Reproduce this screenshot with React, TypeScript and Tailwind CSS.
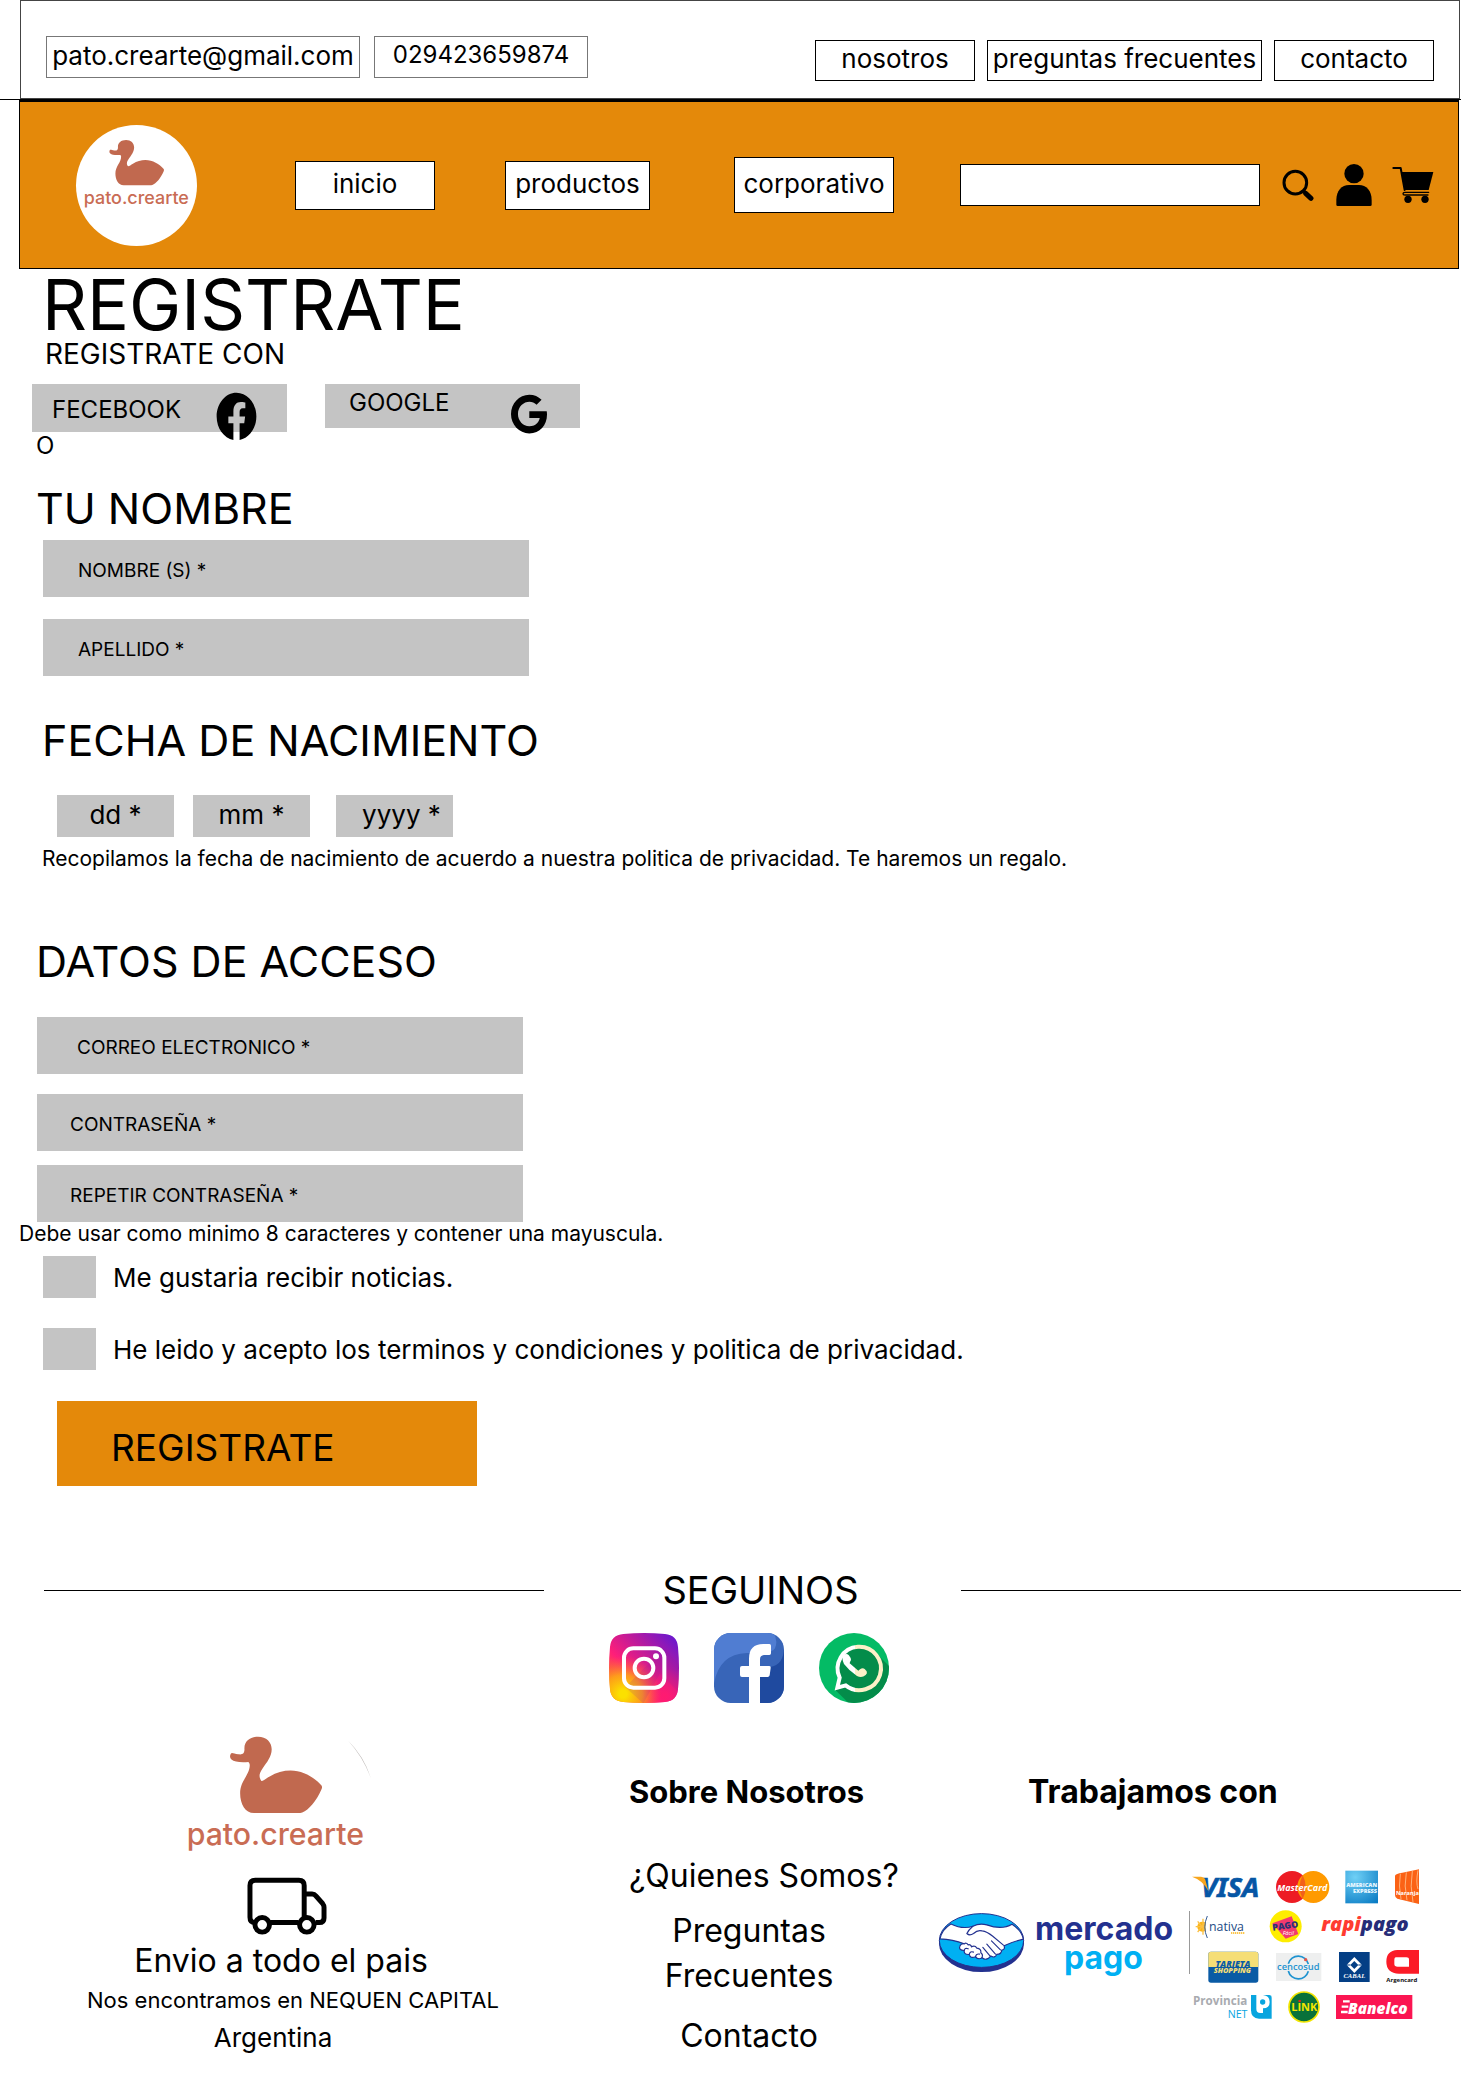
import type { ReactNode } from "react";
import { FaFacebook, FaGoogle } from "react-icons/fa";

const navBox =
  "flex items-center justify-center border border-black bg-white pb-1 text-[26px] whitespace-nowrap";
const heading = "text-[43px] leading-[48px] whitespace-nowrap";
const field =
  "block h-[57px] w-full max-w-[486px] bg-[#c4c4c4] pt-1 text-[19px] text-black placeholder:text-black placeholder:opacity-100";
const dateField =
  "h-[42px] w-[117px] bg-[#c4c4c4] pb-1 text-center text-[26px] text-black placeholder:text-black placeholder:opacity-100";

function DuckLogo({ arc = false, className }: { arc?: boolean; className: string }) {
  return (
    <svg
      viewBox={arc ? "375 105 560 355" : "375 105 540 355"}
      className={className}
      role="img"
      aria-label="pato.crearte"
    >
      <path
        fill="#c1694f"
        d="M510 161C513 156 520 162 532 163C545 165 551 161 551 148C549 124 568 110 592 110C617 110 633 126 633 148C633 170 618 188 606 205C594 222 594 232 602 243C609 243 617 235 627 230C647 218 668 212 690 212C727 212 762 233 783 257Q786 262 783 268C768 303 745 330 725 338Q720 340 712 340L580 340C553 340 538 312 538 280C538 243 567 225 567 195Q567 190 563 186C540 188 520 186 512 179C506 173 507 166 510 161Z"
      />
      {arc && <path d="M862 121Q910 168 932 235Q906 168 862 121Z" fill="#b9b4b2" />}
      <text
        x="644"
        y="436"
        textAnchor="middle"
        fontFamily="Inter, sans-serif"
        fontWeight="500"
        fontSize="91"
        fill="#c96c54"
      >
        pato.crearte
      </text>
    </svg>
  );
}

function SearchIcon() {
  return (
    <svg viewBox="39 56 96 96" className="size-8" fill="none" stroke="#000" aria-hidden="true">
      <circle cx="79" cy="97" r="34" strokeWidth="9" />
      <path d="M104 122L110 127" strokeWidth="9" />
      <path d="M110 129L126 144" strokeWidth="15" strokeLinecap="round" />
    </svg>
  );
}

function UserIcon() {
  return (
    <svg viewBox="201 42 108 126" className="h-[42px] w-9" aria-hidden="true">
      <circle cx="255" cy="71" r="29" />
      <path d="M202 164V150C202 122 218 105 240 105H270C292 105 308 122 308 150V164Q308 168 304 168H206Q202 168 202 164Z" />
    </svg>
  );
}

function CartIcon() {
  return (
    <svg viewBox="368 48 126 114" className="h-[38px] w-[42px]" aria-hidden="true">
      <path d="M372 54H394L406 120" fill="none" stroke="#000" strokeWidth="6" strokeLinecap="round" strokeLinejoin="round" />
      <path d="M397 66H492L478 120H407Z" />
      <path d="M478 127H407Q401 127 401 131Q401 135 407 135H476" fill="none" stroke="#000" strokeWidth="4" strokeLinecap="round" />
      <circle cx="416" cy="148" r="11" />
      <circle cx="467" cy="148" r="11" />
    </svg>
  );
}

function InstagramIcon() {
  return (
    <svg viewBox="147 249 210 210" className="size-[70px]" aria-hidden="true">
      <defs>
        <linearGradient id="igBase" x1="0" y1="1" x2="1" y2="0">
          <stop offset="0.1" stopColor="#ff7a1a" />
          <stop offset="0.38" stopColor="#ff1f78" />
          <stop offset="0.65" stopColor="#b91a9d" />
          <stop offset="1" stopColor="#5a18d8" />
        </linearGradient>
        <radialGradient id="igSun" cx="0.2" cy="0.87" r="0.55">
          <stop offset="0.1" stopColor="#fbe000" />
          <stop offset="0.5" stopColor="#fdb010" stopOpacity="0.8" />
          <stop offset="1" stopColor="#ff5a40" stopOpacity="0" />
        </radialGradient>
        <radialGradient id="igPink" cx="0.8" cy="0.9" r="0.4">
          <stop offset="0" stopColor="#ff1a70" />
          <stop offset="1" stopColor="#ff1a70" stopOpacity="0" />
        </radialGradient>
        <clipPath id="igClip">
          <path d="M190 252Q252 246 315 252Q351 255 354 291Q360 354 354 417Q351 453 315 456Q252 462 190 456Q153 453 150 417Q144 354 150 291Q153 255 190 252Z" />
        </clipPath>
      </defs>
      <g clipPath="url(#igClip)">
        <rect x="147" y="249" width="210" height="210" fill="url(#igBase)" />
        <rect x="147" y="249" width="210" height="210" fill="url(#igPink)" />
        <rect x="147" y="249" width="210" height="210" fill="url(#igSun)" />
        <path d="M309 296L360 345V430L300 370L250 460L196 412Z" fill="#8a1a9c" opacity="0.15" />
      </g>
      <rect x="192" y="295" width="121" height="118" rx="28" fill="none" stroke="#fff" strokeWidth="12" />
      <circle cx="252" cy="354" r="28" fill="none" stroke="#fff" strokeWidth="12" />
      <circle cx="288" cy="319" r="9" fill="#fff" />
    </svg>
  );
}

function FacebookColorIcon() {
  return (
    <svg viewBox="462 249 210 210" className="size-[70px]" aria-hidden="true">
      <defs>
        <clipPath id="fbClip">
          <rect x="462" y="249" width="210" height="210" rx="50" />
        </clipPath>
      </defs>
      <g clipPath="url(#fbClip)">
        <rect x="462" y="249" width="210" height="210" fill="#3865b8" />
        <path d="M462 249H640Q655 270 645 295Q636 310 600 309H560Q478 312 462 400Z" fill="#507dd2" />
        <path d="M672 290Q672 345 630 351L600 380V459H672Z" fill="#1f4a9f" />
      </g>
      <path
        fill="#fff"
        d="M567 459V381H546Q540 381 540 375V354Q540 348 546 348H567V326Q567 282 610 282H628Q633 282 633 287V310Q633 315 628 315H612Q600 316 600 328V348H627Q633 348 632 354L629 376Q628 381 623 381H600V459Z"
      />
    </svg>
  );
}

function WhatsappIcon() {
  return (
    <svg viewBox="780 249 210 210" className="size-[70px]" aria-hidden="true">
      <defs>
        <clipPath id="waClip">
          <circle cx="885" cy="354" r="105" />
        </clipPath>
        <linearGradient id="waTone" gradientUnits="userSpaceOnUse" x1="780" y1="0" x2="990" y2="0">
          <stop offset="0.51" stopColor="#fff" />
          <stop offset="0.51" stopColor="#fdf0c8" />
        </linearGradient>
      </defs>
      <g clipPath="url(#waClip)">
        <rect x="780" y="249" width="210" height="210" fill="#04bb65" />
        <path d="M938 296L1000 358V470H880L829 420Z" fill="#048c4a" />
      </g>
      <path
        d="M835 413L842 383A65 65 0 1 1 860 406Z"
        fill="#048c4a"
        stroke="url(#waTone)"
        strokeWidth="12"
      />
      <path
        fill="url(#waTone)"
        d="M853 316Q862 308 869 315L875 324Q878 330 873 336L872 340L898 362L903 358Q911 352 917 357L923 364Q926 370 920 375Q908 386 894 378Q870 362 855 342Q847 326 853 316Z"
      />
    </svg>
  );
}

function TruckIcon() {
  return (
    <svg viewBox="560 537 242 174" className="h-[58px] w-20" fill="none" stroke="#000" strokeWidth="15" aria-hidden="true">
      <path d="M584 674Q569 674 569 658V562Q569 546 585 546H717Q733 546 733 562V660M630 674H716" />
      <path d="M738 588H757Q764 588 769 594L789 617Q793 622 793 628V660Q793 674 779 674H768" />
      <circle cx="606" cy="681" r="22" />
      <circle cx="741" cy="681" r="22" />
    </svg>
  );
}

function HandshakeLogo() {
  return (
    <svg viewBox="25 36 262 182" className="h-[61px] w-[87px] shrink-0" role="img" aria-label="Mercado Pago">
      <ellipse cx="156" cy="130" rx="128" ry="86" fill="#23318f" />
      <ellipse cx="156" cy="121" rx="127" ry="81" fill="#00b0f3" stroke="#23318f" strokeWidth="3" />
      <path
        d="M64 71C90 84 112 84 130 78Q150 68 172 74C200 84 228 84 248 72Q278 92 282 117Q250 124 224 137Q228 148 217 150Q216 163 202 163Q196 175 184 168Q170 184 158 173Q146 180 138 170Q122 176 119 163Q102 164 104 151Q86 150 91 138Q94 130 104 131Q70 118 31 116Q36 88 64 71Z"
        fill="#fff"
        stroke="#23318f"
        strokeWidth="3.5"
      />
      <path
        d="M130 78Q116 90 112 100Q120 108 132 100Q144 88 158 92Q172 94 190 108L222 135M186 122L213 149M172 132L198 162M160 142L182 168M104 131Q110 126 116 134Q124 132 126 140Q136 134 142 144Q156 146 154 158Q162 164 157 173M104 151Q106 142 116 146M119 163Q122 152 132 156M138 170Q140 160 150 162"
        fill="none"
        stroke="#23318f"
        strokeWidth="3.5"
        strokeLinecap="round"
      />
    </svg>
  );
}

function Mark({ box, size, label, children }: { box: string; size: string; label: string; children: ReactNode }) {
  return (
    <svg viewBox={box} className={`${size} shrink-0`} role="img" aria-label={label} fontFamily="'Open Sans', sans-serif">
      {children}
    </svg>
  );
}

function PaymentMarks() {
  return (
    <div className="flex w-[229px] shrink-0 flex-col gap-[5px] overflow-hidden pt-0.5">
      <div className="flex gap-[15px] pl-px">
        <Mark box="36 30 207 105" size="h-[35px] w-[69px]" label="Visa">
          <text x="66" y="115" fontSize="82" fontWeight="700" fontStyle="italic" fontFamily="'Noto Sans', sans-serif" fill="#0656a5" stroke="#0656a5" strokeWidth="2">VISA</text>
          <path d="M39 53H66Q78 54 80 66L88 96Q72 64 39 53Z" fill="#f7a51d" />
        </Mark>
        <Mark box="291 30 165 105" size="h-[35px] w-[55px]" label="MasterCard">
          <circle cx="342" cy="84" r="48" fill="#ed1c24" />
          <circle cx="406" cy="84" r="48" fill="#ff9a00" />
          <path d="M374 48Q356 84 374 120Q392 84 374 48Z" fill="#f2601a" />
          <text x="373" y="95" fontSize="27" fontWeight="700" fontStyle="italic" textAnchor="middle" fill="#fff">MasterCard</text>
        </Mark>
        <Mark box="498 30 102 105" size="h-[35px] w-[34px]" label="American Express">
          <defs>
            <radialGradient id="amex" cx="0.3" cy="0.2" r="1">
              <stop offset="0" stopColor="#6fd0f6" />
              <stop offset="1" stopColor="#0a7cc4" />
            </radialGradient>
          </defs>
          <rect x="499" y="35" width="98" height="98" fill="url(#amex)" />
          <text x="548" y="83" fontSize="17" fontWeight="800" textAnchor="middle" fill="#e8f7ff">AMERICAN</text>
          <text x="558" y="102" fontSize="17" fontWeight="800" textAnchor="middle" fill="#e8f7ff">EXPRESS</text>
        </Mark>
        <Mark box="645 30 75 105" size="h-[35px] w-[25px]" label="Naranja">
          <path d="M648 50Q650 44 670 41L720 31V135L655 119Q648 117 648 108Z" fill="#fb6215" />
          <path d="M664 44Q658 80 666 120M682 40Q674 80 684 124M700 36Q692 80 702 130M717 34Q710 70 717 90" fill="none" stroke="#ffb27a" strokeWidth="3" />
          <text x="651" y="108" fontSize="17" fontWeight="700" fill="#fff">Naranja</text>
        </Mark>
      </div>
      <div className="flex pl-[5px]">
        <Mark box="48 147 153 105" size="h-[35px] w-[51px]" label="Nativa">
          <circle cx="70" cy="200" r="15" fill="#fbb415" />
          <path d="M72 176V224M50 200H90M56 184L82 216M56 216L82 184" stroke="#fbc045" strokeWidth="4" />
          <path d="M86 168Q72 202 86 234L100 234V168Z" fill="#fff" />
          <path d="M85 168Q70 202 85 234" fill="none" stroke="#345c96" strokeWidth="3" />
          <text x="90" y="214" fontSize="37" fill="#234b85">nativa</text>
          <path d="M156 219H196" stroke="#fbb415" strokeWidth="5" strokeDasharray="4 2" />
        </Mark>
        <div className="ml-[22px] flex gap-[15px]">
          <Mark box="267 147 105 105" size="size-[35px]" label="Pago Fácil">
            <circle cx="320" cy="199" r="48" fill="#feed00" />
            <path d="M280 190L338 169L358 222L320 236Z" fill="#f23a6e" />
            <text x="319" y="207" fontSize="27" fontWeight="800" textAnchor="middle" transform="rotate(-8 319 200)" fill="#2b3175">PAGO</text>
            <text x="328" y="224" fontSize="17" fontStyle="italic" textAnchor="middle" fill="#fff">Fácil</text>
          </Mark>
          <Mark box="417 147 282 105" size="h-[35px] w-[94px]" label="Rapipago">
            <text x="558" y="212" fontSize="60" fontWeight="800" fontStyle="italic" textAnchor="middle" fill="#ff3b30">
              rapi<tspan fill="#272c78">pago</tspan>
            </text>
          </Mark>
        </div>
      </div>
      <div className="flex gap-4 pl-[18px]">
        <Mark box="87 267 153 108" size="h-9 w-[51px]" label="Tarjeta Shopping">
          <rect x="88" y="275" width="150" height="93" rx="8" fill="#0a5ba5" />
          <path d="M96 275H230Q238 275 238 283V321H88V283Q88 275 96 275Z" fill="#f5de76" />
          <text x="162" y="321" fontSize="26" fontWeight="800" fontStyle="italic" textAnchor="middle" fill="#0a5ba5">TARJETA</text>
          <text x="160" y="340" fontSize="22" fontWeight="800" fontStyle="italic" textAnchor="middle" fill="#f5de76">SHOPPING</text>
        </Mark>
        <Mark box="282 267 141 108" size="h-9 w-[47px]" label="Cencosud">
          <rect x="285" y="279" width="136" height="84" fill="#eeefef" />
          <path d="M322 311A31 31 0 0 1 382 312M322 333A31 31 0 0 0 382 334" fill="none" stroke="#1f93d0" strokeWidth="5" />
          <text x="352" y="329" fontSize="28" fontWeight="600" textAnchor="middle" fill="#1f93d0">cencosud</text>
          <circle cx="374" cy="299" r="5" fill="#e2574c" />
        </Mark>
        <Mark box="477 267 96 108" size="h-9 w-8" label="Cabal">
          <rect x="480" y="276" width="92" height="90" fill="#043f85" />
          <path d="M526 291L549 315L526 339L503 315Z" fill="#fff" />
          <path d="M526 303L538 315L526 327L514 315Z" fill="#043f85" />
          <path d="M503 315H514M538 315H549" stroke="#043f85" strokeWidth="3" />
          <text x="526" y="354" fontSize="20" fontWeight="700" fontStyle="italic" textAnchor="middle" fontFamily="'Liberation Serif', serif" fill="#fff">CABAL</text>
        </Mark>
        <Mark box="621 267 99 108" size="h-9 w-[33px]" label="Argencard">
          <path fillRule="evenodd" fill="#fb1b27" d="M655 270H730V341H660Q622 339 622 305Q622 272 655 270ZM650 292Q646 293 646 299V312Q646 320 656 320H690V299Q690 292 682 292Z" />
          <text x="622" y="365" fontSize="18" fontWeight="700" fill="#111">Argencard</text>
        </Mark>
      </div>
      <div className="flex gap-3.5 pl-0.5">
        <Mark box="39 393 243 102" size="h-[34px] w-[81px]" label="Provincia NET">
          <text x="42" y="439" fontSize="35" fontWeight="700" fill="#a9abb0">Provincia</text>
          <text x="146" y="477" fontSize="32" fill="#08a5df">NET</text>
          <path d="M216 408H270Q278 408 278 416V479H240Q216 478 216 454Z" fill="#08a5df" />
          <path d="M232 408H252Q272 410 272 429Q272 448 252 448V462H244Q232 462 232 450Z" fill="#fff" />
          <circle cx="251" cy="429" r="8" fill="#08a5df" />
        </Mark>
        <Mark box="324 393 102 102" size="size-[34px]" label="Link">
          <circle cx="375" cy="444" r="45" fill="#09713a" stroke="#f2e500" strokeWidth="5" />
          <text x="376" y="457" fontSize="33" fontWeight="700" textAnchor="middle" fill="#f2e500">LINK</text>
          <circle cx="362" cy="426" r="4" fill="#e2231a" />
        </Mark>
        <Mark box="468 393 234 102" size="h-[34px] w-[78px]" label="Banelco">
          <rect x="471" y="408" width="229" height="72" fill="#fb1552" />
          <path d="M492 427H512M488 443H508M486 459H506" stroke="#fff" strokeWidth="7" />
          <text x="507" y="464" fontSize="46" fontWeight="800" fontStyle="italic" fill="#fff">Banelco</text>
        </Mark>
      </div>
    </div>
  );
}

export default function App() {
  return (
    <div className="overflow-hidden bg-white font-['Inter',sans-serif] text-black">
      <header>
        <div className="mr-px ml-5 flex h-[99px] justify-between border border-[#444] pr-[25px] pl-[25px]">
          <div className="flex gap-3.5 pt-[35px]">
            <a href="mailto:pato.crearte@gmail.com" className="flex h-[42px] w-[314px] items-center justify-center border border-[#777] pb-1 text-[26px]">
              pato.crearte@gmail.com
            </a>
            <a href="tel:029423659874" className="flex h-[42px] w-[214px] items-center justify-center border border-[#777] pb-1 text-2xl">
              029423659874
            </a>
          </div>
          <nav aria-label="Información" className="flex gap-3 pt-[39px]">
            <a href="#nosotros" className={`${navBox} h-[41px] w-40`}>nosotros</a>
            <a href="#preguntas" className={`${navBox} h-[41px] w-[275px]`}>preguntas frecuentes</a>
            <a href="#contacto" className={`${navBox} h-[41px] w-40`}>contacto</a>
          </nav>
        </div>
        <div className="h-px bg-black" />
        <div className="mr-0.5 ml-[19px] flex h-[169px] items-center border border-t-2 border-black bg-[#e4890a] pr-6 pl-14">
          <a href="#inicio" className="flex size-[121px] shrink-0 justify-center rounded-full bg-white pt-3.5">
            <DuckLogo className="h-[70px] w-[107px]" />
          </a>
          <nav aria-label="Principal" className="flex items-center">
            <a href="#inicio" className={`${navBox} ml-[98px] h-[49px] w-[140px]`}>inicio</a>
            <a href="#productos" className={`${navBox} ml-[70px] h-[49px] w-[145px]`}>productos</a>
            <a href="#corporativo" className={`${navBox} ml-[84px] h-14 w-40`}>corporativo</a>
          </nav>
          <input type="search" aria-label="Buscar" className="ml-[66px] h-[42px] min-w-0 flex-1 border border-black bg-white px-3 text-xl" />
          <button type="button" aria-label="Buscar" className="ml-[22px]"><SearchIcon /></button>
          <button type="button" aria-label="Mi cuenta" className="ml-[22px]"><UserIcon /></button>
          <button type="button" aria-label="Carrito" className="ml-5"><CartIcon /></button>
        </div>
      </header>

      <main>
        <h1 className="pl-[42px] text-[70px] leading-[72px]">REGISTRATE</h1>
        <form onSubmit={(e) => e.preventDefault()}>
          <p className="pl-[45px] text-[28px] leading-[26px]">REGISTRATE CON</p>
          <div className="mt-[17px] flex items-start gap-[38px] pl-8">
            <button type="button" className="flex h-12 w-[255px] items-start justify-between bg-[#c4c4c4] pr-[30px] pl-5 text-2xl">
              <span className="leading-[52px]">FECEBOOK</span>
              <FaFacebook preserveAspectRatio="none" className="mt-2 h-[49px] w-[41px]" aria-hidden="true" />
            </button>
            <button type="button" className="flex h-11 w-[255px] items-start justify-between bg-[#c4c4c4] pr-[33px] pl-6 text-2xl">
              <span className="leading-[38px]">GOOGLE</span>
              <FaGoogle preserveAspectRatio="none" className="mt-2.5 h-10 w-9" aria-hidden="true" />
            </button>
          </div>
          <p className="pl-9 text-2xl leading-7">O</p>

          <section className="mt-6 pl-9">
            <h2 className={heading}>TU NOMBRE</h2>
            <div className="mt-2 flex flex-col gap-[22px] pl-[7px]">
              <input aria-label="Nombre (s)" placeholder="NOMBRE (S) *" className={`${field} pl-[35px]`} />
              <input aria-label="Apellido" placeholder="APELLIDO *" className={`${field} pl-[35px]`} />
            </div>
          </section>

          <section className="mt-10 pl-[42px]">
            <h2 className={heading}>FECHA DE NACIMIENTO</h2>
            <div className="mt-[31px] flex pl-[15px]">
              <input aria-label="Día" placeholder="dd *" className={dateField} />
              <input aria-label="Mes" placeholder="mm *" className={`${dateField} ml-[19px]`} />
              <input aria-label="Año" placeholder="yyyy *" className={`${dateField} ml-[26px] pl-3.5`} />
            </div>
            <p className="mt-2 text-[21px] leading-7">
              Recopilamos la fecha de nacimiento de acuerdo a nuestra politica de privacidad. Te haremos un regalo.
            </p>
          </section>

          <section className="mt-16">
            <h2 className={`${heading} pl-9`}>DATOS DE ACCESO</h2>
            <div className="mt-8 flex flex-col pl-[37px]">
              <input type="email" aria-label="Correo electronico" placeholder="CORREO ELECTRONICO *" className={`${field} pl-10`} />
              <input type="password" aria-label="Contraseña" placeholder="CONTRASEÑA *" className={`${field} mt-5 pl-[33px]`} />
              <input type="password" aria-label="Repetir contraseña" placeholder="REPETIR CONTRASEÑA *" className={`${field} mt-3.5 pl-[33px]`} />
            </div>
            <p className="pl-[19px] text-[21px] leading-6">Debe usar como minimo 8 caracteres y contener una mayuscula.</p>
            <div className="mt-2.5 flex flex-col gap-[30px] pl-[43px]">
              <label className="flex h-[42px] items-center gap-[17px] text-[26px]">
                <input type="checkbox" className="h-[42px] w-[53px] shrink-0 appearance-none bg-[#c4c4c4] checked:bg-[#e4890a]" />
                Me gustaria recibir noticias.
              </label>
              <label className="flex h-[42px] items-center gap-[17px] text-[26px]">
                <input type="checkbox" className="h-[42px] w-[53px] shrink-0 appearance-none bg-[#c4c4c4] checked:bg-[#e4890a]" />
                He leido y acepto los terminos y condiciones y politica de privacidad.
              </label>
            </div>
            <button type="submit" className="mt-[31px] ml-[57px] block h-[85px] w-[420px] bg-[#e4890a] pt-2 pl-[54px] text-left text-[37px]">
              REGISTRATE
            </button>
          </section>
        </form>
      </main>

      <footer className="pt-20 pb-10">
        <div className="flex items-center pl-11">
          <div className="h-px flex-1 bg-black" />
          <h2 className="w-[417px] pl-4 text-center text-[38px] leading-[48px]">SEGUINOS</h2>
          <div className="h-px flex-1 bg-black" />
        </div>
        <div className="mt-[19px] flex justify-center gap-[35px] pl-9">
          <a href="#instagram" aria-label="Instagram"><InstagramIcon /></a>
          <a href="#facebook" aria-label="Facebook"><FacebookColorIcon /></a>
          <a href="#whatsapp" aria-label="WhatsApp"><WhatsappIcon /></a>
        </div>
        <div className="flex items-start">
          <div className="flex w-[562px] shrink-0 flex-col items-center pt-8 text-center">
            <div className="pr-1"><DuckLogo arc className="h-[118px] w-[186px]" /></div>
            <div className="mt-6 pl-3"><TruckIcon /></div>
            <p className="mt-2 text-[32px] leading-9">Envio a todo el pais</p>
            <p className="pt-0.5 pl-6 text-[22px] leading-[38px]">Nos encontramos en NEQUEN CAPITAL</p>
            <p className="pr-4 text-[26px] leading-[38px]">Argentina</p>
          </div>
          <nav aria-label="Sobre Nosotros" className="ml-[67px] flex w-60 shrink-0 flex-col text-center text-[32px] whitespace-nowrap">
            <h3 className="mt-[73px] text-left text-[31px] leading-8 font-bold">Sobre Nosotros</h3>
            <a href="#quienes" className="mt-12 text-left leading-10">¿Quienes Somos?</a>
            <a href="#preguntas" className="mt-3 leading-[45px]">
              Preguntas
              <br />
              Frecuentes
            </a>
            <a href="#contacto" className="mt-[18px] leading-10">Contacto</a>
          </nav>
          <section className="ml-[69px] shrink-0">
            <h3 className="mt-[73px] pl-[90px] text-[32px] leading-8 font-bold">Trabajamos con</h3>
            <div className="mt-[59px] flex items-start">
              <div className="mt-11 flex h-[63px] items-center gap-2.5 border-r border-[#999] pr-[17px]">
                <HandshakeLogo />
                <p className="w-[137px] text-center text-[32px] leading-[29px] font-bold text-[#23318f]">
                  mercado
                  <br />
                  <span className="text-[#00b0f3]">pago</span>
                </p>
              </div>
              <PaymentMarks />
            </div>
          </section>
        </div>
      </footer>
    </div>
  );
}
